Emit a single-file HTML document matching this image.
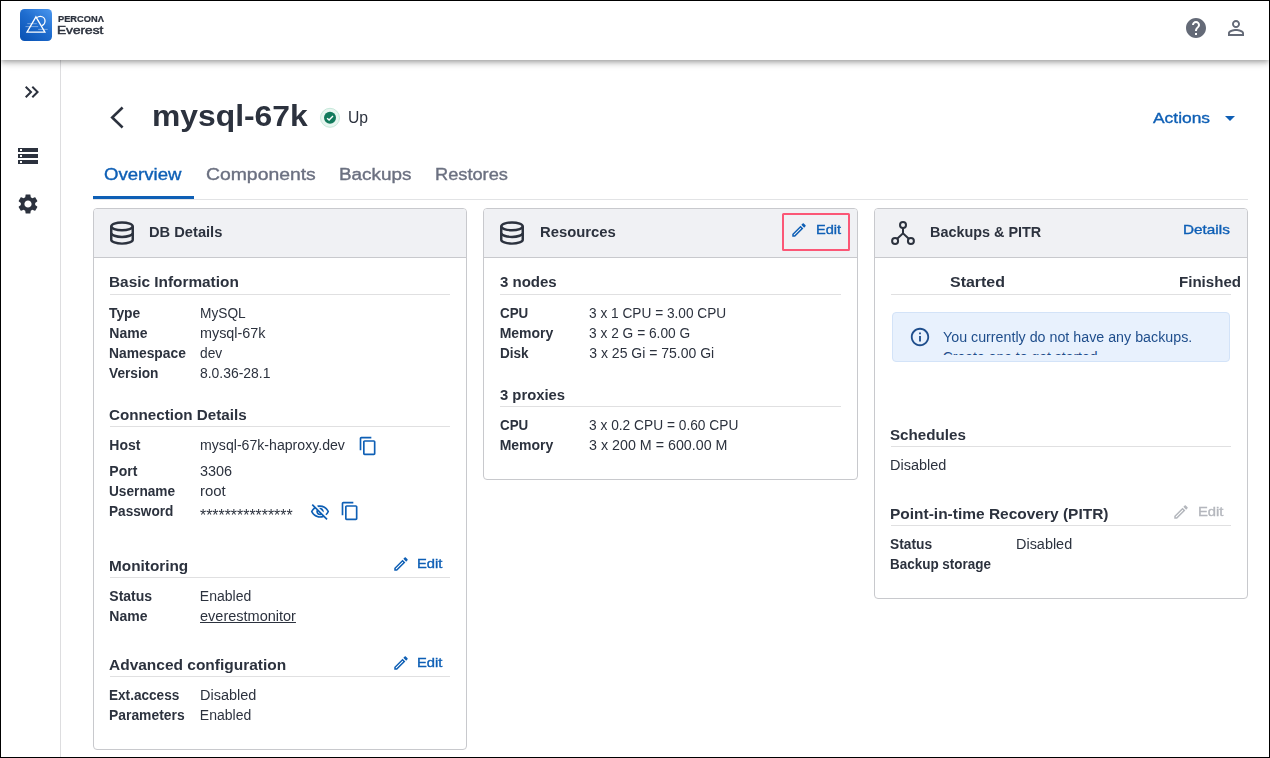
<!DOCTYPE html>
<html>
<head>
<meta charset="utf-8">
<title>Percona Everest</title>
<style>
*{box-sizing:border-box;margin:0;padding:0}
html,body{width:1270px;height:758px;overflow:hidden;background:#fff}
body{font-family:"Liberation Sans",sans-serif;color:#2c323e;position:relative;font-size:14px}
.a{position:absolute}
#frame{position:absolute;left:0;top:0;width:1270px;height:758px;border:1px solid #000;z-index:50}
#topbar{position:absolute;left:1px;top:1px;width:1268px;height:59px;background:#fff;box-shadow:0 2px 4px -1px rgba(0,0,0,.2),0 4px 5px 0 rgba(0,0,0,.14),0 1px 10px 0 rgba(0,0,0,.12);z-index:10}
#side{position:absolute;left:1px;top:60px;width:60px;height:697px;border-right:1px solid #dddddf;background:#fff}
.t{position:absolute;white-space:nowrap;line-height:1;z-index:20;color:#2c323e;transform-origin:0 0}
.card{position:absolute;border:1px solid #c8c9cd;border-radius:4px;background:#fff;overflow:hidden}
.chead{position:absolute;left:0;top:0;right:0;height:49px;background:#f0f1f4;border-bottom:1px solid #c8c9cd}
.hr{position:absolute;height:1px;background:#e0e0e1;z-index:5}
svg{position:absolute;display:block;z-index:20;overflow:visible}
</style>
</head>
<body>
<div id="topbar"></div>
<div id="side"></div>

<!-- logo -->
<svg style="left:20px;top:9px" width="32" height="32" viewBox="0 0 32 32">
<defs><linearGradient id="lg" x1="1" y1="0" x2="0.2" y2="1"><stop offset="0" stop-color="#4c98ef"/><stop offset="0.5" stop-color="#1f6dcf"/><stop offset="1" stop-color="#0c55b7"/></linearGradient>
<clipPath id="cc"><path d="M15.900 6.500 L26 23.300 H32 V0 H15.900 Z"/></clipPath></defs>
<rect width="32" height="32" rx="4.500" fill="url(#lg)"/>
<circle cx="20.300" cy="12.100" r="4.750" fill="none" stroke="#fff" stroke-width="1.300" clip-path="url(#cc)"/>
<path d="M15.900 7.900 L7 23.100 H24.900 Z" fill="none" stroke="#fff" stroke-width="1.300"/>
<path d="M7.300 14.700H16.800M5.500 17.600H18.200M18.200 20.400H27.700" stroke="#fff" stroke-opacity=".5" stroke-width="0.800"/>
</svg>

<!-- top right icons -->
<svg style="left:1184px;top:16px" width="24" height="24" viewBox="0 0 24 24" fill="#646a77"><path d="M12 2C6.48 2 2 6.48 2 12s4.48 10 10 10 10-4.48 10-10S17.52 2 12 2zm1 17h-2v-2h2v2zm2.070-7.750-.9.920C13.450 12.900 13 13.500 13 15h-2v-.5c0-1.100.450-2.100 1.170-2.830l1.240-1.260c.370-.360.590-.860.590-1.410 0-1.100-.9-2-2-2s-2 .9-2 2H8c0-2.210 1.790-4 4-4s4 1.790 4 4c0 .880-.360 1.680-.930 2.250z"/></svg>
<svg style="left:1224px;top:16px" width="24" height="24" viewBox="0 0 24 24" fill="#646a77"><path d="M12 5.900c1.160 0 2.100.940 2.100 2.100s-.940 2.100-2.100 2.100S9.900 9.160 9.900 8s.940-2.100 2.100-2.100m0 9c2.970 0 6.100 1.460 6.100 2.100v1.100H5.900V17c0-.640 3.130-2.100 6.100-2.100M12 4C9.790 4 8 5.790 8 8s1.790 4 4 4 4-1.790 4-4-1.790-4-4-4zm0 9c-2.670 0-8 1.340-8 4v3h16v-3c0-2.660-5.330-4-8-4z"/></svg>

<!-- sidebar icons -->
<svg style="left:20px;top:80px" width="24" height="24" viewBox="0 0 24 24" fill="#2c323e"><path d="M6.410 6 5 7.410 9.580 12 5 16.590 6.410 18l6-6z"/><path d="m13 6-1.410 1.410L16.170 12l-4.580 4.590L13 18l6-6z"/></svg>
<svg style="left:16px;top:144px" width="24" height="24" viewBox="0 0 24 24" fill="#2c323e"><path d="M2 20h20v-4H2v4zm2-3h2v2H4v-2zM2 4v4h20V4H2zm4 3H4V5h2v2zm-4 7h20v-4H2v4zm2-3h2v2H4v-2z"/></svg>
<svg style="left:16px;top:192px" width="24" height="24" viewBox="0 0 24 24" fill="#2c323e"><path d="M19.140 12.940c.040-.3.060-.610.060-.940 0-.320-.020-.640-.070-.940l2.030-1.580c.180-.140.230-.410.120-.610l-1.920-3.320c-.120-.220-.370-.290-.590-.220l-2.390.960c-.5-.380-1.030-.7-1.620-.940l-.360-2.540c-.040-.240-.240-.410-.480-.410h-3.840c-.240 0-.430.170-.470.410l-.360 2.540c-.590.240-1.130.570-1.620.940l-2.390-.960c-.220-.080-.470 0-.590.220L2.740 8.870c-.120.210-.080.470.120.610l2.030 1.580c-.050.3-.090.630-.090.940s.020.640.070.940l-2.030 1.580c-.180.140-.230.410-.120.610l1.920 3.320c.120.220.370.290.590.220l2.390-.960c.5.380 1.030.7 1.620.940l.360 2.540c.050.240.240.410.480.410h3.840c.240 0 .440-.170.470-.410l.360-2.540c.590-.240 1.130-.560 1.620-.940l2.390.960c.220.080.470 0 .590-.220l1.920-3.320c.120-.220.070-.470-.120-.610l-2.010-1.580zM12 15.600c-1.980 0-3.600-1.620-3.600-3.600s1.620-3.600 3.600-3.600 3.600 1.620 3.600 3.600-1.620 3.600-3.600 3.600z"/></svg>

<!-- title row -->
<svg style="left:104px;top:101px" width="32" height="32" viewBox="0 0 32 32"><path d="M18.600 6.500 L8.200 16.500 L18.600 26.500" fill="none" stroke="#2c323e" stroke-width="2.600"/></svg>
<svg style="left:318px;top:106px" width="24" height="24" viewBox="0 0 24 24"><circle cx="12" cy="11.800" r="9.500" fill="#e8f6f0" stroke="#c6e8da" stroke-width="1"/><circle cx="12" cy="11.800" r="6" fill="#127a5c"/><path d="M9.100 12.200 L11.100 14.100 L15 10.100" fill="none" stroke="#fff" stroke-width="1.400"/></svg>
<svg style="left:1218px;top:106px" width="24" height="24" viewBox="0 0 24 24" fill="#0e5fb5"><path d="m7 10 5 5 5-5z"/></svg>

<!-- tabs -->
<div class="a" style="left:93px;top:199px;width:1155px;height:1px;background:#e2e3e5"></div>
<div class="a" style="left:93px;top:196px;width:101px;height:3px;background:#0e5fb5"></div>

<!-- cards -->
<div class="card" style="left:93px;top:208px;width:374px;height:542px"><div class="chead"></div></div>
<div class="card" style="left:483px;top:208px;width:375px;height:272px"><div class="chead"></div></div>
<div class="card" style="left:874px;top:208px;width:374px;height:391px"><div class="chead"></div></div>


<!-- card header icons -->
<svg style="left:110px;top:221px" width="24" height="24" viewBox="0 0 24 24"><g fill="none" stroke="#2c323e" stroke-width="2.450"><ellipse cx="12" cy="5.300" rx="10.750" ry="3.900"/><path d="M1.250 5.300V18.700A10.750 3.900 0 0 0 22.750 18.700V5.300"/><path d="M1.250 12A10.750 3.900 0 0 0 22.750 12"/></g></svg>
<svg style="left:500px;top:221px" width="24" height="24" viewBox="0 0 24 24"><g fill="none" stroke="#2c323e" stroke-width="2.450"><ellipse cx="12" cy="5.300" rx="10.750" ry="3.900"/><path d="M1.250 5.300V18.700A10.750 3.900 0 0 0 22.750 18.700V5.300"/><path d="M1.250 12A10.750 3.900 0 0 0 22.750 12"/></g></svg>
<svg style="left:891px;top:221px" width="24" height="24" viewBox="0 0 24 24"><g fill="none" stroke="#2c323e" stroke-width="2"><circle cx="12" cy="4" r="3"/><circle cx="4.100" cy="19.900" r="3"/><circle cx="19.900" cy="19.900" r="3"/><path d="M12 7V12.300M6.200 17.800L12 12.300L17.800 17.800"/></g></svg>

<!-- pencils -->
<svg style="left:789.700px;top:220.700px" width="18" height="18" fill="#0e5fb5" viewBox="0 0 24 24"><path d="M14.060 9.020l.920.920L5.920 19H5v-.920l9.060-9.060M17.660 3c-.250 0-.510.100-.7.290l-1.830 1.830 3.750 3.750 1.830-1.830c.390-.390.390-1.020 0-1.410l-2.340-2.340c-.2-.2-.450-.290-.710-.290zm-3.600 3.190L3 17.250V21h3.750L17.810 9.940l-3.750-3.750z"/></svg>
<svg style="left:391.600px;top:554.900px" width="18" height="18" fill="#0e5fb5" viewBox="0 0 24 24"><path d="M14.060 9.020l.920.920L5.920 19H5v-.920l9.060-9.060M17.660 3c-.250 0-.510.100-.7.290l-1.830 1.830 3.750 3.750 1.830-1.830c.390-.390.390-1.020 0-1.410l-2.340-2.340c-.2-.2-.450-.290-.710-.290zm-3.600 3.190L3 17.250V21h3.750L17.810 9.940l-3.750-3.750z"/></svg>
<svg style="left:391.600px;top:654px" width="18" height="18" fill="#0e5fb5" viewBox="0 0 24 24"><path d="M14.060 9.020l.920.920L5.920 19H5v-.920l9.060-9.060M17.660 3c-.250 0-.510.100-.7.290l-1.830 1.830 3.750 3.750 1.830-1.830c.390-.390.390-1.020 0-1.410l-2.340-2.340c-.2-.2-.450-.290-.710-.290zm-3.600 3.190L3 17.250V21h3.750L17.810 9.940l-3.750-3.750z"/></svg>
<svg style="left:1171.700px;top:502.900px" width="18" height="18" fill="#b4b7bd" viewBox="0 0 24 24"><path d="M14.060 9.020l.920.920L5.920 19H5v-.920l9.060-9.060M17.660 3c-.250 0-.510.100-.7.290l-1.830 1.830 3.750 3.750 1.830-1.830c.390-.390.390-1.020 0-1.410l-2.340-2.340c-.2-.2-.450-.290-.710-.290zm-3.600 3.190L3 17.250V21h3.750L17.810 9.940l-3.750-3.750z"/></svg>

<!-- red highlight -->
<div class="a" style="left:782px;top:213px;width:68px;height:38px;border:2px solid #fb5776;border-radius:1.500px;z-index:21"></div>

<!-- copy / eye -->
<svg style="left:357.800px;top:435.700px" width="20" height="20" fill="#0e5fb5" viewBox="0 0 24 24"><path d="M16 1H4c-1.100 0-2 .9-2 2v14h2V3h12V1zm3 4H8c-1.100 0-2 .9-2 2v14c0 1.100.9 2 2 2h11c1.100 0 2-.9 2-2V7c0-1.100-.9-2-2-2zm0 16H8V7h11v14z"/></svg>
<svg style="left:339.700px;top:501.200px" width="20" height="20" fill="#0e5fb5" viewBox="0 0 24 24"><path d="M16 1H4c-1.100 0-2 .9-2 2v14h2V3h12V1zm3 4H8c-1.100 0-2 .9-2 2v14c0 1.100.9 2 2 2h11c1.100 0 2-.9 2-2V7c0-1.100-.9-2-2-2zm0 16H8V7h11v14z"/></svg>
<svg style="left:310.300px;top:501.800px" width="20" height="20" viewBox="0 0 24 24" fill="#0e5fb5"><path d="M12 6c3.790 0 7.170 2.130 8.820 5.500-.590 1.220-1.420 2.270-2.410 3.120l1.410 1.410c1.390-1.230 2.490-2.770 3.180-4.530C21.270 7.110 17 4 12 4c-1.270 0-2.490.2-3.640.570l1.650 1.650C10.660 6.090 11.320 6 12 6zm-1.070 1.140L13 9.210c.570.250 1.030.710 1.280 1.280l2.070 2.070c.080-.340.140-.7.140-1.070C16.500 9.010 14.480 7 12 7c-.370 0-.720.050-1.070.140zM2.010 3.870l2.680 2.680C3.060 7.830 1.770 9.530 1 11.500 2.730 15.890 7 19 12 19c1.520 0 2.980-.290 4.320-.820l3.420 3.420 1.410-1.410L3.420 2.450 2.010 3.870zm7.500 7.500 2.610 2.610c-.040.010-.080.020-.120.020-1.380 0-2.500-1.120-2.500-2.500 0-.050.010-.080.010-.130zm-3.400-3.400 1.750 1.750c-.230.550-.360 1.150-.360 1.780 0 2.480 2.020 4.500 4.500 4.500.630 0 1.230-.130 1.770-.360l.980.980c-.880.240-1.800.380-2.750.380-3.790 0-7.170-2.130-8.820-5.500.7-1.430 1.720-2.610 2.930-3.530z"/></svg>

<!-- dividers -->
<div class="hr" style="left:110px;top:294px;width:340px"></div>
<div class="hr" style="left:110px;top:426px;width:340px"></div>
<div class="hr" style="left:110px;top:577px;width:340px"></div>
<div class="hr" style="left:110px;top:676px;width:340px"></div>
<div class="hr" style="left:500px;top:294px;width:341px"></div>
<div class="hr" style="left:500px;top:406px;width:341px"></div>
<div class="hr" style="left:891px;top:294px;width:340px"></div>
<div class="hr" style="left:891px;top:446px;width:340px"></div>
<div class="hr" style="left:891px;top:525px;width:340px"></div>

<!-- alert -->
<div class="a" style="left:892px;top:312px;width:338px;height:50px;background:#e8f1fd;border:1px solid #d3e3f8;border-radius:4px"></div>
<svg style="left:908.800px;top:326px" width="22" height="22" viewBox="0 0 24 24" fill="#1f4e8c"><path d="M11 7h2v2h-2zm0 4h2v6h-2zm1-9C6.480 2 2 6.480 2 12s4.480 10 10 10 10-4.480 10-10S17.520 2 12 2zm0 18c-4.410 0-8-3.590-8-8s3.590-8 8-8 8 3.590 8 8-3.590 8-8 8z"/></svg>
<div class="a" style="left:940px;top:345px;width:200px;height:10px;overflow:hidden;z-index:20"><span class="t" style="left:2.700px;top:5px;font-size:14px;color:#1f4e8c">Create one to get started.</span></div>

<div id="txt" style="position:absolute;left:0;top:0;width:1270px;height:758px;will-change:transform;z-index:20">
<span class="t" style="left:57.77px;top:16.01px;font-size:8.2px;font-weight:bold;transform:scaleX(1.1329);-webkit-text-stroke:0.2px;">PERCONΛ</span>
<span class="t" style="left:56.73px;top:24.01px;font-size:11.6px;transform:scaleX(1.1785);-webkit-text-stroke:0.5px;">Everest</span>
<span class="t" style="left:151.59px;top:101.00px;font-size:29.5px;font-weight:bold;transform:scaleX(1.0791);">mysql-67k</span>
<span class="t" style="left:347.95px;top:110.00px;font-size:16px;transform:scaleX(0.9816);">Up</span>
<span class="t" style="left:1152.76px;top:110.01px;font-size:15.2px;color:#0e5fb5;transform:scaleX(1.1456);-webkit-text-stroke:0.35px;">Actions</span>
<span class="t" style="left:104.23px;top:167.00px;font-size:16px;color:#0e5fb5;transform:scaleX(1.1611);-webkit-text-stroke:0.35px;">Overview</span>
<span class="t" style="left:205.91px;top:167.00px;font-size:16px;color:#6b7080;transform:scaleX(1.2099);-webkit-text-stroke:0.35px;">Components</span>
<span class="t" style="left:339.35px;top:167.00px;font-size:16px;color:#6b7080;transform:scaleX(1.1783);-webkit-text-stroke:0.35px;">Backups</span>
<span class="t" style="left:434.84px;top:167.00px;font-size:16px;color:#6b7080;transform:scaleX(1.1391);-webkit-text-stroke:0.35px;">Restores</span>
<span class="t" style="left:149.02px;top:225.00px;font-size:14px;font-weight:bold;transform:scaleX(1.0474);">DB Details</span>
<span class="t" style="left:539.82px;top:225.00px;font-size:14px;font-weight:bold;transform:scaleX(1.0595);">Resources</span>
<span class="t" style="left:929.52px;top:225.00px;font-size:14px;font-weight:bold;transform:scaleX(1.0288);">Backups &amp; PITR</span>
<span class="t" style="left:815.54px;top:224.01px;font-size:12.6px;color:#0e5fb5;transform:scaleX(1.1582);-webkit-text-stroke:0.35px;">Edit</span>
<span class="t" style="left:1182.65px;top:224.01px;font-size:12.6px;color:#0e5fb5;transform:scaleX(1.2160);-webkit-text-stroke:0.35px;">Details</span>
<span class="t" style="left:109.31px;top:275.00px;font-size:14px;font-weight:bold;transform:scaleX(1.0975);">Basic Information</span>
<span class="t" style="left:109.31px;top:306.00px;font-size:14px;font-weight:bold;transform:scaleX(0.9870);">Type</span>
<span class="t" style="left:199.83px;top:306.00px;font-size:14px;transform:scaleX(0.9792);">MySQL</span>
<span class="t" style="left:109.31px;top:326.00px;font-size:14px;font-weight:bold;">Name</span>
<span class="t" style="left:199.83px;top:326.00px;font-size:14px;transform:scaleX(1.0276);">mysql-67k</span>
<span class="t" style="left:109.31px;top:346.00px;font-size:14px;font-weight:bold;transform:scaleX(0.9870);">Namespace</span>
<span class="t" style="left:199.83px;top:346.00px;font-size:14px;transform:scaleX(0.9834);">dev</span>
<span class="t" style="left:109.31px;top:366.00px;font-size:14px;font-weight:bold;transform:scaleX(0.9782);">Version</span>
<span class="t" style="left:199.83px;top:366.00px;font-size:14px;transform:scaleX(0.9941);">8.0.36-28.1</span>
<span class="t" style="left:109.31px;top:408.00px;font-size:14px;font-weight:bold;transform:scaleX(1.0856);">Connection Details</span>
<span class="t" style="left:109.31px;top:438.00px;font-size:14px;font-weight:bold;">Host</span>
<span class="t" style="left:199.55px;top:438.00px;font-size:14px;transform:scaleX(1.0087);">mysql-67k-haproxy.dev</span>
<span class="t" style="left:109.31px;top:464.00px;font-size:14px;font-weight:bold;">Port</span>
<span class="t" style="left:199.55px;top:464.00px;font-size:14px;transform:scaleX(1.0317);">3306</span>
<span class="t" style="left:109.31px;top:484.00px;font-size:14px;font-weight:bold;transform:scaleX(0.9765);">Username</span>
<span class="t" style="left:199.55px;top:484.00px;font-size:14px;transform:scaleX(1.0661);">root</span>
<span class="t" style="left:109.31px;top:504.00px;font-size:14px;font-weight:bold;transform:scaleX(0.9735);">Password</span>
<span class="t" style="left:200.14px;top:508.30px;font-size:16px;transform:scaleX(0.9914);">***************</span>
<span class="t" style="left:109.31px;top:559.00px;font-size:14px;font-weight:bold;transform:scaleX(1.0958);">Monitoring</span>
<span class="t" style="left:417.22px;top:558.01px;font-size:12.6px;color:#0e5fb5;transform:scaleX(1.1691);-webkit-text-stroke:0.35px;">Edit</span>
<span class="t" style="left:109.31px;top:589.00px;font-size:14px;font-weight:bold;">Status</span>
<span class="t" style="left:199.83px;top:589.00px;font-size:14px;">Enabled</span>
<span class="t" style="left:109.31px;top:609.00px;font-size:14px;font-weight:bold;">Name</span>
<span class="t" style="left:199.83px;top:609.00px;font-size:14px;transform:scaleX(1.0363);text-decoration:underline;">everestmonitor</span>
<span class="t" style="left:109.31px;top:658.00px;font-size:14px;font-weight:bold;transform:scaleX(1.1055);">Advanced configuration</span>
<span class="t" style="left:417.22px;top:657.01px;font-size:12.6px;color:#0e5fb5;transform:scaleX(1.1691);-webkit-text-stroke:0.35px;">Edit</span>
<span class="t" style="left:109.31px;top:688.00px;font-size:14px;font-weight:bold;transform:scaleX(0.9705);">Ext.access</span>
<span class="t" style="left:199.83px;top:688.00px;font-size:14px;transform:scaleX(1.0349);">Disabled</span>
<span class="t" style="left:109.31px;top:708.00px;font-size:14px;font-weight:bold;transform:scaleX(0.9913);">Parameters</span>
<span class="t" style="left:199.83px;top:708.00px;font-size:14px;">Enabled</span>
<span class="t" style="left:499.67px;top:275.00px;font-size:14px;font-weight:bold;transform:scaleX(1.0718);">3 nodes</span>
<span class="t" style="left:499.67px;top:306.00px;font-size:14px;font-weight:bold;transform:scaleX(0.9566);">CPU</span>
<span class="t" style="left:589.30px;top:306.00px;font-size:14px;transform:scaleX(0.9770);">3 x 1 CPU = 3.00 CPU</span>
<span class="t" style="left:499.67px;top:326.00px;font-size:14px;font-weight:bold;">Memory</span>
<span class="t" style="left:589.30px;top:326.00px;font-size:14px;transform:scaleX(0.9818);">3 x 2 G = 6.00 G</span>
<span class="t" style="left:499.67px;top:346.00px;font-size:14px;font-weight:bold;transform:scaleX(0.9663);">Disk</span>
<span class="t" style="left:589.30px;top:346.00px;font-size:14px;">3 x 25 Gi = 75.00 Gi</span>
<span class="t" style="left:499.67px;top:388.00px;font-size:14px;font-weight:bold;transform:scaleX(1.0592);">3 proxies</span>
<span class="t" style="left:499.67px;top:418.00px;font-size:14px;font-weight:bold;transform:scaleX(0.9566);">CPU</span>
<span class="t" style="left:589.30px;top:418.00px;font-size:14px;transform:scaleX(0.9815);">3 x 0.2 CPU = 0.60 CPU</span>
<span class="t" style="left:499.67px;top:438.00px;font-size:14px;font-weight:bold;">Memory</span>
<span class="t" style="left:589.30px;top:438.00px;font-size:14px;transform:scaleX(1.0199);">3 x 200 M = 600.00 M</span>
<span class="t" style="left:950.13px;top:275.00px;font-size:14px;font-weight:bold;transform:scaleX(1.1380);">Started</span>
<span class="t" style="left:1179.42px;top:275.00px;font-size:14px;font-weight:bold;transform:scaleX(1.0770);">Finished</span>
<span class="t" style="left:942.94px;top:330.00px;font-size:14px;color:#1f4e8c;transform:scaleX(1.0187);">You currently do not have any backups.</span>
<span class="t" style="left:889.93px;top:428.00px;font-size:14px;font-weight:bold;transform:scaleX(1.0828);">Schedules</span>
<span class="t" style="left:889.60px;top:458.00px;font-size:14px;transform:scaleX(1.0350);">Disabled</span>
<span class="t" style="left:889.93px;top:507.00px;font-size:14px;font-weight:bold;transform:scaleX(1.1058);">Point-in-time Recovery (PITR)</span>
<span class="t" style="left:1197.67px;top:506.01px;font-size:12.6px;color:#b4b7bd;transform:scaleX(1.1731);-webkit-text-stroke:0.35px;">Edit</span>
<span class="t" style="left:889.93px;top:537.00px;font-size:14px;font-weight:bold;transform:scaleX(0.9848);">Status</span>
<span class="t" style="left:1015.80px;top:537.00px;font-size:14px;transform:scaleX(1.0311);">Disabled</span>
<span class="t" style="left:889.93px;top:557.00px;font-size:14px;font-weight:bold;transform:scaleX(0.9611);">Backup storage</span>
</div>
<div id="frame"></div>
</body>
</html>
